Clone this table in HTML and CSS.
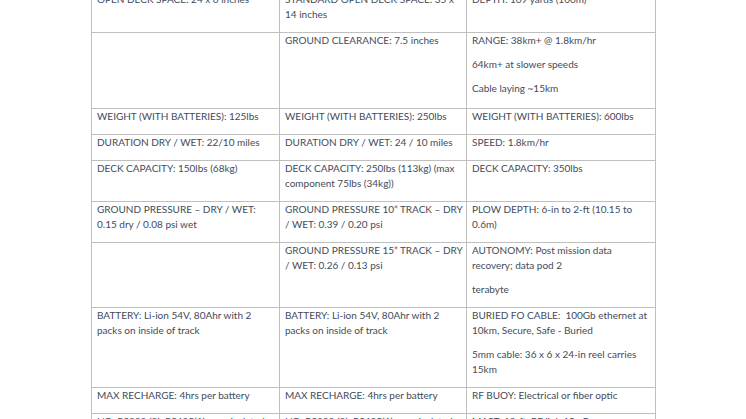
FILE: index.html
```html
<!DOCTYPE html>
<html>
<head>
<meta charset="utf-8">
<link rel="stylesheet" href="styles.css">
</head>
<body>
<div class="page">
<table class="spec">
<colgroup><col class="c1"><col class="c2"><col class="c3"></colgroup>
<tr>
<td><p>OPEN DECK SPACE: 24 x 6 inches</p></td>
<td><p>STANDARD OPEN DECK SPACE: 35 x<br>14 inches</p></td>
<td><p>DEPTH: 109 yards (100m)</p></td>
</tr>
<tr class="tall">
<td></td>
<td><p>GROUND CLEARANCE: 7.5 inches</p></td>
<td><p>RANGE: 38km+ @ 1.8km/hr</p><p>64km+ at slower speeds</p><p>Cable laying ~15km</p></td>
</tr>
<tr>
<td><p>WEIGHT (WITH BATTERIES): 125lbs</p></td>
<td><p>WEIGHT (WITH BATTERIES): 250lbs</p></td>
<td><p>WEIGHT (WITH BATTERIES): 600lbs</p></td>
</tr>
<tr>
<td><p>DURATION DRY / WET: 22/10 miles</p></td>
<td><p>DURATION DRY / WET: 24 / 10 miles</p></td>
<td><p>SPEED: 1.8km/hr</p></td>
</tr>
<tr>
<td><p>DECK CAPACITY: 150lbs (68kg)</p></td>
<td><p>DECK CAPACITY: 250lbs (113kg) (max<br>component 75lbs (34kg))</p></td>
<td><p>DECK CAPACITY: 350lbs</p></td>
</tr>
<tr>
<td><p>GROUND PRESSURE – DRY / WET:<br>0.15 dry / 0.08 psi wet</p></td>
<td><p>GROUND PRESSURE 10” TRACK – DRY<br>/ WET: 0.39 / 0.20 psi</p></td>
<td><p>PLOW DEPTH: 6-in to 2-ft (10.15 to<br>0.6m)</p></td>
</tr>
<tr>
<td></td>
<td><p>GROUND PRESSURE 15” TRACK – DRY<br>/ WET: 0.26 / 0.13 psi</p></td>
<td><p>AUTONOMY: Post mission data<br>recovery; data pod 2</p><p>terabyte</p></td>
</tr>
<tr>
<td><p>BATTERY: Li-ion 54V, 80Ahr with 2<br>packs on inside of track</p></td>
<td><p>BATTERY: Li-ion 54V, 80Ahr with 2<br>packs on inside of track</p></td>
<td><p>BURIED FO CABLE:&nbsp; 100Gb ethernet at<br>10km, Secure, Safe - Buried</p><p>5mm cable: 36 x 6 x 24-in reel carries<br>15km</p></td>
</tr>
<tr>
<td><p>MAX RECHARGE: 4hrs per battery</p></td>
<td><p>MAX RECHARGE: 4hrs per battery</p></td>
<td><p>RF BUOY: Electrical or fiber optic</p></td>
</tr>
<tr>
<td><p>I/O: RS232 (2), RS485(1), non-isolated</p></td>
<td><p>I/O: RS232 (2), RS485(1), non-isolated</p></td>
<td><p>MAST: 19-ft, RF link 10mB</p></td>
</tr>
</table>
</div>
</body>
</html>
```
FILE: styles.css
```css
html, body {
  margin: 0;
  padding: 0;
  background: #ffffff;
}
.page {
  padding-left: 91px;
  width: 565px;
  height: 419px;
  overflow: hidden;
}
.spec {
  border-collapse: collapse;
  table-layout: fixed;
  width: 565px;
  margin-top: -9px;
  font-family: Lato, "Liberation Sans", sans-serif;
  font-size: 10px;
  line-height: 15px;
  color: #434b59;
}
.c1 { width: 188px; }
.c2 { width: 187px; }
.c3 { width: 189px; }
.spec td {
  border: 1px solid #bfbfbf;
  vertical-align: top;
  padding: 0 5px 1px 5px;
  white-space: nowrap;
}
.spec .tall td {
  padding-bottom: 3px;
}
.spec p {
  margin: 0 0 9px 0;
}
```
